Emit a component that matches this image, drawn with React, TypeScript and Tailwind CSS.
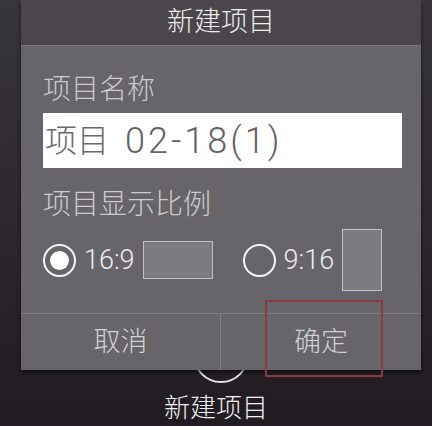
import { useState } from "react";

const FONT = {
  fontFamily: '"Roboto", "Noto Sans CJK SC", "Noto Sans", sans-serif',
};

const RATIOS = [
  { key: "16:9", box: "w-[70px] h-[38px]" },
  { key: "9:16", box: "w-[40px] h-[62px]" },
];

function Radio({ checked }: { checked: boolean }) {
  return (
    <span className="flex h-[33px] w-[33px] items-center justify-center rounded-full border-[2.5px] border-[#f4f3f5]">
      {checked && <span className="h-[19px] w-[19px] rounded-full bg-white" />}
    </span>
  );
}

export default function App() {
  const [ratio, setRatio] = useState("16:9");

  return (
    <div
      className="relative h-[426px] w-[432px] overflow-hidden bg-gradient-to-b from-[#39363b] via-[#2c282d] to-[#201c21]"
      style={FONT}
    >
      {/* outline of the round button behind the dialog */}
      <span className="absolute left-[193px] top-[327px] h-[56px] w-[56px] rounded-full border-2 border-[#e6e4e7]" />

      {/* dialog */}
      <div className="relative z-10 ml-[21px] flex w-[400px] flex-col bg-[#67646a] shadow-[0_2px_4px_rgba(0,0,0,0.6)]">
        <div className="flex h-[45px] items-center justify-center bg-[#4a464b] text-[27px] font-light leading-none text-[#efedf0]">
          新建项目
        </div>

        <div className="flex flex-col border-t border-[#7a777c] pl-[22px] pr-[19px] pt-[30px] pb-[22px]">
          <p className="text-[28px] font-light leading-none text-[#cdcbce]">
            项目名称
          </p>
          <div className="mt-[9px] flex h-[55px] items-center bg-white pl-[2px] text-[32px] font-light leading-none text-[#6b686c]">
            项目
            <span className="ml-[16px] text-[36px] font-light tracking-[3px] text-[#646165]">
              02-18(1)
            </span>
          </div>

          <p className="mt-[23px] text-[28px] font-light leading-none text-[#cdcbce]">
            项目显示比例
          </p>
          <div className="mt-[10px] flex h-[62px] items-center gap-[30px]">
            {RATIOS.map((r) => (
              <button
                key={r.key}
                type="button"
                onClick={() => setRatio(r.key)}
                className="flex items-center"
              >
                <Radio checked={ratio === r.key} />
                <span className="ml-[8px] text-[27px] font-light leading-none text-[#eeedef]">
                  {r.key}
                </span>
                <span
                  className={`ml-[8px] border-[1.5px] border-[#c4c1c6] bg-[#7e7b80] ${r.box}`}
                />
              </button>
            ))}
          </div>
        </div>

        <div className="grid h-[57px] grid-cols-2 border-t border-[#7f7c82] text-[27px] font-light leading-none text-[#d2d0d3]">
          <button type="button" className="flex items-center justify-center border-r border-[#807d83]">
            取消
          </button>
          <button type="button" className="flex items-center justify-center">
            确定
          </button>
        </div>
      </div>

      {/* highlight frame around the confirm button */}
      <span className="absolute left-[265px] top-[300px] z-20 h-[77px] w-[118px] border-2 border-[#8c3b41]" />

      <div className="flex justify-center pt-[25px] text-[26px] font-light leading-none text-[#f2f1f3]">
        新建项目
      </div>
    </div>
  );
}
